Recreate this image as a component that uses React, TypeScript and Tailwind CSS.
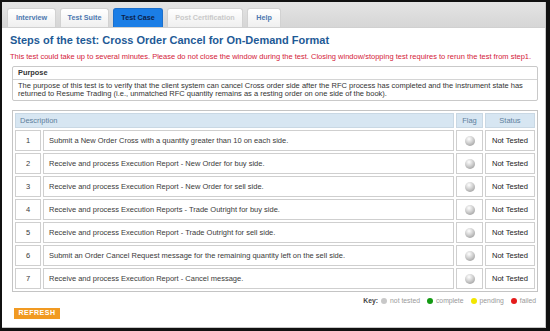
import React from 'react';

const steps = [
  'Submit a New Order Cross with a quantity greater than 10 on each side.',
  'Receive and process Execution Report - New Order for buy side.',
  'Receive and process Execution Report - New Order for sell side.',
  'Receive and process Execution Reports - Trade Outright for buy side.',
  'Receive and process Execution Report - Trade Outright for sell side.',
  'Submit an Order Cancel Request message for the remaining quantity left on the sell side.',
  'Receive and process Execution Report - Cancel message.',
];

const tabs = [
  { label: 'Interview', state: 'normal', width: 'w-[49px]' },
  { label: 'Test Suite', state: 'normal', width: 'w-[49px]' },
  { label: 'Test Case', state: 'active', width: 'w-[50px]' },
  { label: 'Post Certification', state: 'disabled', width: 'w-[76px]' },
  { label: 'Help', state: 'normal', width: 'w-[34px]' },
];

const Tab = ({ label, state, width }: { label: string; state: string; width: string }) => {
  const tone =
    state === 'active'
      ? 'bg-[#1b7ee6] border-[#1b6fcc] text-[#0b1f4a]'
      : state === 'disabled'
      ? 'bg-gradient-to-b from-white to-[#efefef] border-[#d2d2d2] text-[#c9c9c9]'
      : 'bg-gradient-to-b from-white to-[#efefef] border-[#d2d2d2] text-[#4c78b0]';
  return (
    <div
      className={`${width} ${tone} h-[19px] flex items-center justify-center border border-b-0 rounded-t-[3px] text-[7.2px] font-bold`}
    >
      {label}
    </div>
  );
};

const Dot = ({ color }: { color: string }) => (
  <span className={`inline-block rounded-full w-[6px] h-[6px] ${color}`} />
);

const App = () => {
  return (
    <div className="w-[550px] h-[331px] bg-[#111] pt-[2px] pl-[2px] pr-[4px] pb-[3px] font-['Liberation_Sans',Arial,sans-serif]">
      <div className="h-full bg-white border-r border-b border-[#c8c8c8] flex flex-col">
        {/* tab bar */}
        <div className="h-[26px] bg-gradient-to-b from-[#e4e4e4] to-[#d6d6d6] flex items-end gap-[4px] pl-[5px] border-b border-[#d0d0d0]">
          {tabs.map(t => (
            <Tab key={t.label} {...t} />
          ))}
        </div>

        <div className="pl-[8px] pr-[6px]">
          <h1 className="mt-[5px] text-[11px] leading-[14px] font-bold text-[#1e5a96]">
            Steps of the test: Cross Order Cancel for On-Demand Format
          </h1>
          <p className="mt-[5px] text-[7.5px] leading-[9px] text-[#d4213a] whitespace-nowrap">
            This test could take up to several minutes. Please do not close the window during the test. Closing window/stopping test requires to rerun the test from step1.
          </p>

          {/* purpose box */}
          <div className="mt-[5px] ml-[2px] mr-[1px] border border-[#c9c9c9] rounded-[2px]">
            <div className="h-[13px] px-[5px] flex items-center text-[7.4px] font-bold text-[#333] border-b border-[#d4d4d4]">
              Purpose
            </div>
            <p className="px-[5px] pt-[2px] pb-[2px] text-[7.5px] leading-[8px] text-[#333]">
              The purpose of this test is to verify that the client system can cancel Cross order side after the RFC process has completed and the instrument state has returned to Resume Trading (i.e., unmatched RFC quantity remains as a resting order on one side of the book).
            </p>
          </div>

          {/* steps table */}
          <table className="mt-[9px] ml-[2px] w-[526px] border-separate border-spacing-[2px] border border-[#c4c4c4] text-[7.5px] text-[#3a3a3a]">
            <thead>
              <tr className="h-[15px]">
                <th colSpan={2} className="bg-[#d7e6f2] text-left font-normal pl-[4px] text-[#5f7f9c] border border-[#c9d8e4]">
                  Description
                </th>
                <th className="w-[27px] bg-[#d7e6f2] font-normal text-[#5f7f9c] border border-[#c9d8e4]">Flag</th>
                <th className="w-[50px] bg-[#d7e6f2] font-normal text-[#5f7f9c] border border-[#c9d8e4]">Status</th>
              </tr>
            </thead>
            <tbody>
              {steps.map((s, i) => (
                <tr key={i} className="h-[21px]">
                  <td className="w-[26px] text-center border border-[#cfcfcf]">{i + 1}</td>
                  <td className="pl-[5px] border border-[#cfcfcf]">{s}</td>
                  <td className="text-center border border-[#cfcfcf]">
                    <span className="inline-block align-middle w-[10px] h-[10px] rounded-full bg-[radial-gradient(circle_at_40%_30%,#ffffff,#cfcfcf_45%,#8c8c8c)]" />
                  </td>
                  <td className="text-center text-[7.6px] text-[#222] border border-[#cfcfcf]">Not Tested</td>
                </tr>
              ))}
            </tbody>
          </table>

          {/* key */}
          <div className="mt-[4px] pr-[3px] flex justify-end items-center gap-[3px] text-[6.8px] text-[#9a9a9a]">
            <span className="font-bold text-[#444]">Key:</span>
            <Dot color="bg-[#c8c8c8]" />
            <span className="mr-[4px]">not tested</span>
            <Dot color="bg-[#139a13]" />
            <span className="mr-[4px]">complete</span>
            <Dot color="bg-[#f2e600]" />
            <span className="mr-[4px]">pending</span>
            <Dot color="bg-[#e41b1b]" />
            <span>failed</span>
          </div>

          <button className="mt-[2px] ml-[4px] h-[11px] w-[46px] bg-[#f19a22] text-white text-[7px] font-bold tracking-[0.5px] flex items-center justify-center">
            REFRESH
          </button>
        </div>
      </div>
    </div>
  );
};

export default App;
